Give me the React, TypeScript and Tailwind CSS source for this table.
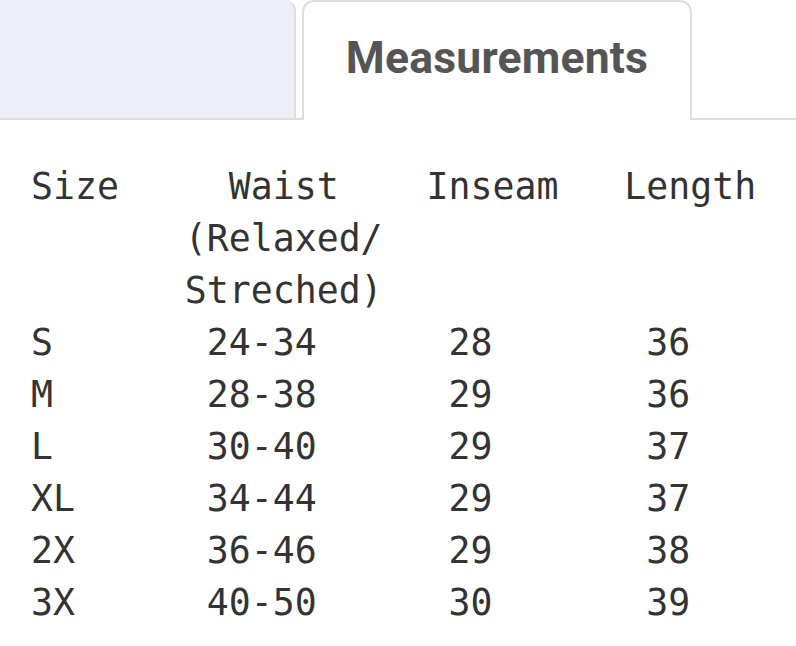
import React from "react";

const rows = [
  ["S", "24-34", "28", "36"],
  ["M", "28-38", "29", "36"],
  ["L", "30-40", "29", "37"],
  ["XL", "34-44", "29", "37"],
  ["2X", "36-46", "29", "38"],
  ["3X", "40-50", "30", "39"],
];

const App: React.FC = () => {
  return (
    <div className="w-[796px] h-[646px] bg-white overflow-hidden">
      {/* tabs */}
      <div className="flex h-[120px]">
        <div className="w-[296px] shrink-0 bg-[#eceef8] border-r-2 border-b-2 border-[#dedede] rounded-tr-[10px]" />
        <div className="w-[6px] shrink-0 border-b-2 border-[#dedede]" />
        <div className="w-[390px] shrink-0 flex items-center justify-center pb-[6px] border-x-2 border-t-2 border-[#dedede] rounded-t-[12px] bg-white">
          <span className="font-['Roboto',sans-serif] font-bold text-[44.5px] text-[#555555] tracking-[0.2px]">
            Measurements
          </span>
        </div>
        <div className="flex-1 border-b-2 border-[#dedede]" />
      </div>

      {/* table */}
      <div className="pl-[31px] pt-[41px] font-['DejaVu_Sans_Mono',monospace] text-[36.5px] leading-[52px] text-[#333333]">
        <div className="grid grid-cols-[7ch_11ch_9ch_1fr]">
          <div>Size</div>
          <div className="pl-[2ch]">Waist</div>
          <div>Inseam</div>
          <div>Length</div>

          <div />
          <div className="col-span-3">(Relaxed/</div>
          <div />
          <div className="col-span-3">Streched)</div>

          {rows.map((r) => (
            <React.Fragment key={r[0]}>
              <div>{r[0]}</div>
              <div className="pl-[1ch]">{r[1]}</div>
              <div className="pl-[1ch]">{r[2]}</div>
              <div className="pl-[1ch]">{r[3]}</div>
            </React.Fragment>
          ))}
        </div>
      </div>
    </div>
  );
};

export default App;
